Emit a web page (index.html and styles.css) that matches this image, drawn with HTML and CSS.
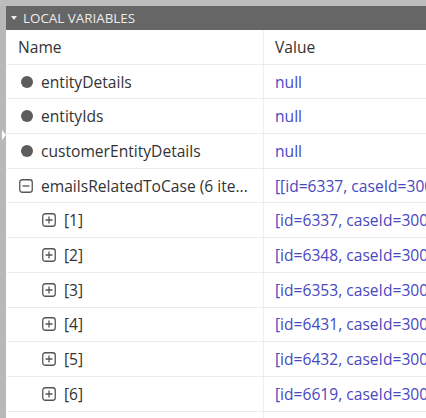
FILE: index.html
```html
<!DOCTYPE html>
<html>
<head>
<meta charset="utf-8">
<link rel="stylesheet" href="styles.css">
</head>
<body>
<div class="topband"></div>
<div class="main">
  <div class="sidestrip"><span class="notch"></span></div>
  <div class="panel">
    <div class="panel-head"><span class="tri"></span>LOCAL VARIABLES</div>
    <div class="table">
      <div class="row head">
        <div class="cell name">Name</div>
        <div class="cell value plain">Value</div>
      </div>
      <div class="row">
        <div class="cell name"><span class="dot"></span>entityDetails</div>
        <div class="cell value">null</div>
      </div>
      <div class="row">
        <div class="cell name"><span class="dot"></span>entityIds</div>
        <div class="cell value">null</div>
      </div>
      <div class="row">
        <div class="cell name"><span class="dot"></span>customerEntityDetails</div>
        <div class="cell value">null</div>
      </div>
      <div class="row">
        <div class="cell name"><span class="box"><svg width="14" height="14" viewBox="0 0 14 14"><rect x="0.75" y="0.75" width="12.5" height="12.5" rx="2.5" fill="none" stroke="#555" stroke-width="1.3"/><path d="M3.5 7h7" stroke="#555" stroke-width="1.3"/></svg></span><span class="trunc">emailsRelatedToCase (6 ite...</span></div>
        <div class="cell value">[[id=6337, caseId=300</div>
      </div>
      <div class="row">
        <div class="cell name child"><span class="box"><svg width="14" height="14" viewBox="0 0 14 14"><rect x="0.75" y="0.75" width="12.5" height="12.5" rx="2.5" fill="none" stroke="#555" stroke-width="1.3"/><path d="M3.5 7h7M7 3.5v7" stroke="#555" stroke-width="1.3"/></svg></span>[1]</div>
        <div class="cell value">[id=6337, caseId=300</div>
      </div>
      <div class="row">
        <div class="cell name child"><span class="box"><svg width="14" height="14" viewBox="0 0 14 14"><rect x="0.75" y="0.75" width="12.5" height="12.5" rx="2.5" fill="none" stroke="#555" stroke-width="1.3"/><path d="M3.5 7h7M7 3.5v7" stroke="#555" stroke-width="1.3"/></svg></span>[2]</div>
        <div class="cell value">[id=6348, caseId=300</div>
      </div>
      <div class="row">
        <div class="cell name child"><span class="box"><svg width="14" height="14" viewBox="0 0 14 14"><rect x="0.75" y="0.75" width="12.5" height="12.5" rx="2.5" fill="none" stroke="#555" stroke-width="1.3"/><path d="M3.5 7h7M7 3.5v7" stroke="#555" stroke-width="1.3"/></svg></span>[3]</div>
        <div class="cell value">[id=6353, caseId=300</div>
      </div>
      <div class="row">
        <div class="cell name child"><span class="box"><svg width="14" height="14" viewBox="0 0 14 14"><rect x="0.75" y="0.75" width="12.5" height="12.5" rx="2.5" fill="none" stroke="#555" stroke-width="1.3"/><path d="M3.5 7h7M7 3.5v7" stroke="#555" stroke-width="1.3"/></svg></span>[4]</div>
        <div class="cell value">[id=6431, caseId=300</div>
      </div>
      <div class="row">
        <div class="cell name child"><span class="box"><svg width="14" height="14" viewBox="0 0 14 14"><rect x="0.75" y="0.75" width="12.5" height="12.5" rx="2.5" fill="none" stroke="#555" stroke-width="1.3"/><path d="M3.5 7h7M7 3.5v7" stroke="#555" stroke-width="1.3"/></svg></span>[5]</div>
        <div class="cell value">[id=6432, caseId=300</div>
      </div>
      <div class="row">
        <div class="cell name child"><span class="box"><svg width="14" height="14" viewBox="0 0 14 14"><rect x="0.75" y="0.75" width="12.5" height="12.5" rx="2.5" fill="none" stroke="#555" stroke-width="1.3"/><path d="M3.5 7h7M7 3.5v7" stroke="#555" stroke-width="1.3"/></svg></span>[6]</div>
        <div class="cell value">[id=6619, caseId=300</div>
      </div>
      <div class="row">
        <div class="cell name"></div>
        <div class="cell value"></div>
      </div>
    </div>
  </div>
</div>
</body>
</html>
```
FILE: styles.css
```css
html, body {
  margin: 0;
  padding: 0;
}
body {
  width: 426px;
  height: 418px;
  overflow: hidden;
  background: #ffffff;
  font-family: "Open Sans", "Noto Sans", sans-serif;
}
.topband {
  height: 6px;
  background: #bdbdbd;
}
.main {
  display: flex;
  height: 412px;
}
.sidestrip {
  width: 6px;
  flex: none;
  background: #b8b8b8;
  position: relative;
}
.notch {
  position: absolute;
  left: 2px;
  top: 124px;
  width: 0;
  height: 0;
  border-top: 5px solid transparent;
  border-bottom: 5px solid transparent;
  border-left: 4px solid #ffffff;
}
.panel {
  flex: 1;
  min-width: 0;
  overflow: hidden;
}
.panel-head {
  height: 24px;
  background: #666666;
  color: #ececec;
  font-size: 13.4px;
  display: flex;
  align-items: center;
  padding-left: 5px;
}
.tri {
  width: 0;
  height: 0;
  border-left: 3.5px solid transparent;
  border-right: 3.5px solid transparent;
  border-top: 4px solid #ececec;
  margin-right: 6px;
}
.row {
  display: grid;
  grid-template-columns: 257px 1fr;
  height: 34.7px;
  border-bottom: 1px solid #ebebeb;
  box-sizing: border-box;
  margin-left: 1px;
}
.cell {
  display: flex;
  align-items: center;
  font-size: 15.6px;
  white-space: nowrap;
  overflow: hidden;
}
.name {
  padding-left: 11px;
  color: #333333;
  border-right: 1px solid #eeeeee;
}
.name.child {
  padding-left: 34px;
}
.value {
  padding-left: 11px;
  color: #4848c0;
}
.value.plain {
  color: #333333;
}
.dot {
  width: 12px;
  height: 12px;
  border-radius: 50%;
  background: #5c5c5c;
  margin-left: 3px;
  margin-right: 8px;
  flex: none;
}
.box {
  display: inline-flex;
  margin-left: 1px;
  margin-right: 8px;
  flex: none;
}
.trunc {
  overflow: hidden;
}
```
